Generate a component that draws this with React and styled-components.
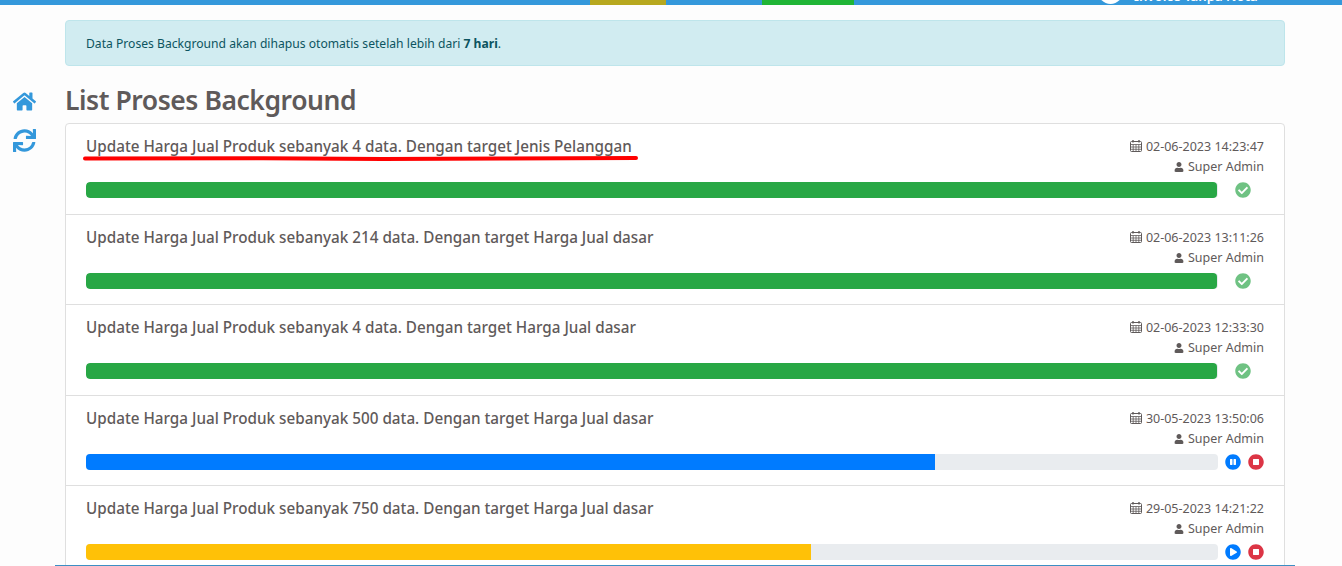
import React from 'react';
import styled, { createGlobalStyle } from 'styled-components';
import { FaHome, FaSync, FaUser, FaCheckCircle, FaPauseCircle, FaPlayCircle, FaStopCircle } from 'react-icons/fa';

const GlobalStyle = createGlobalStyle`
  html, body {
    margin: 0;
    height: 566px;
    overflow: hidden;
    background: #fdfdfd;
    font-family: "Noto Sans", "Open Sans", sans-serif;
    color: #5a5a5a;
  }
  * { box-sizing: border-box; }
`

const data = [
  { title: 'Update Harga Jual Produk sebanyak 4 data. Dengan target Jenis Pelanggan', date: '02-06-2023 14:23:47', value: 99.9, color: '#28a745', state: 'done', marked: true },
  { title: 'Update Harga Jual Produk sebanyak 214 data. Dengan target Harga Jual dasar', date: '02-06-2023 13:11:26', value: 99.9, color: '#28a745', state: 'done' },
  { title: 'Update Harga Jual Produk sebanyak 4 data. Dengan target Harga Jual dasar', date: '02-06-2023 12:33:30', value: 99.9, color: '#28a745', state: 'done' },
  { title: 'Update Harga Jual Produk sebanyak 500 data. Dengan target Harga Jual dasar', date: '30-05-2023 13:50:06', value: 75, color: '#007bff', state: 'running' },
  { title: 'Update Harga Jual Produk sebanyak 750 data. Dengan target Harga Jual dasar', date: '29-05-2023 14:21:22', value: 64.05, color: '#ffc107', state: 'paused' },
]

const CalendarIcon = () => (
  <svg width="12" height="12" viewBox="0 0 12 12" fill="none" stroke="currentColor">
    <rect x="0.5" y="1.5" width="11" height="10" rx="1" />
    <path d="M0.5 4.5H11.5M0.5 7H11.5M0.5 9.3H11.5M3.2 4.5V11.5M6 4.5V11.5M8.8 4.5V11.5" strokeWidth="0.8" />
    <path d="M3 0V2.5M9 0V2.5" strokeWidth="1.4" />
  </svg>
)

const TopBar = styled.div`
  height: 5px;
  background: #3498db;
  display: flex;
  position: relative;
  overflow: hidden;
`
const Segment = styled.div`
  width: ${(props) => props.w}px;
  margin-left: ${(props) => props.gap}px;
  background: ${(props) => props.color};
`
const Avatar = styled.div`
  position: absolute;
  left: 1098px;
  top: -21px;
  width: 25px;
  height: 25px;
  border-radius: 50%;
  background: #fff;
`
const TopLabel = styled.div`
  position: absolute;
  left: 1134px;
  top: -11px;
  font-size: 13.2px;
  font-weight: 600;
  line-height: 14px;
  white-space: nowrap;
  color: #fff;
`
const Page = styled.div`
  display: flex;
  padding-top: 15px;
`
const Side = styled.div`
  width: 65px;
  padding: 70px 0 0 13px;
  display: flex;
  flex-direction: column;
  gap: 16px;
  color: #3498db;
  font-size: 23px;
  svg { display: block; }
`
const Main = styled.div`
  width: 1220px;
`
const Alert = styled.div`
  height: 46px;
  padding: 0 20px;
  display: flex;
  align-items: center;
  font-size: 12.13px;
  color: #0c5460;
  background: #d1ecf1;
  border: 1px solid #bee5eb;
  border-radius: 4px;
  white-space: pre;
  b { font-weight: 700; }
`
const Title = styled.h2`
  margin: 17px 0 6px;
  font-size: 26.5px;
  line-height: 34px;
  font-weight: 600;
  letter-spacing: -0.45px;
  color: #5f5a5a;
`
const List = styled.ul`
  list-style: none;
  margin: 0;
  padding: 0;
  background: #fff;
  border: 1px solid #dfdfdf;
  border-radius: 4px;
`
const Item = styled.li`
  position: relative;
  height: 90.5px;
  padding: 12px 20px;
  border-bottom: 1px solid #dfdfdf;
`
const Head = styled.div`
  display: flex;
  justify-content: space-between;
  height: 46px;
`
const Name = styled.div`
  font-size: 15.25px;
  font-weight: 500;
  line-height: 20px;
  color: #5f5a5a;
`
const Meta = styled.div`
  padding-top: 1px;
  text-align: right;
  font-size: 12.5px;
  line-height: 20px;
  color: #5f5a5a;
  svg { vertical-align: -1px; margin-right: 4px; }
`
const Row = styled.div`
  display: flex;
  align-items: center;
`
const Track = styled.div`
  width: 1132px;
  height: 16px;
  background: #e9ecef;
  border-radius: 4px;
  overflow: hidden;
`
const Fill = styled.div`
  height: 100%;
  background: ${(props) => props.color};
  border-radius: ${(props) => (props.full ? '4px' : '0')};
`
const Actions = styled.div`
  flex: 1;
  display: flex;
  justify-content: flex-end;
  gap: 7px;
  font-size: 16px;
  svg { display: block; }
`
const DoneAction = styled(Actions)`
  justify-content: flex-start;
  padding-left: 17px;
`
const Scribble = styled.svg`
  position: absolute;
  left: 17px;
  top: 30px;
`
const Footer = styled.div`
  position: fixed;
  left: 55px;
  width: 1240px;
  bottom: 0;
  height: 1px;
  background: #3d8fc4;
`

const App = () => {
  return (
    <>
      <GlobalStyle />
      <TopBar>
        <Segment w={76} gap={590} color="#b7a81f" />
        <Segment w={92} gap={96} color="#20b536" />
        <Avatar />
        <TopLabel>Invoice Tanpa Nota</TopLabel>
      </TopBar>
      <Page>
        <Side>
          <FaHome />
          <FaSync />
        </Side>
        <Main>
          <Alert>Data Proses Background akan dihapus otomatis setelah lebih dari <b>7 hari</b>.</Alert>
          <Title>List Proses Background</Title>
          <List>
            {data.map((item) => (
              <Item key={item.date}>
                <Head>
                  <Name>{item.title}</Name>
                  <Meta>
                    <div><CalendarIcon />{item.date}</div>
                    <div><FaUser size={10} />Super Admin</div>
                  </Meta>
                </Head>
                <Row>
                  <Track>
                    <Fill color={item.color} full={item.value > 99} style={{ width: `${item.value}%` }} />
                  </Track>
                  {item.state === 'done' && (
                    <DoneAction>
                      <FaCheckCircle color="#6fc283" />
                    </DoneAction>
                  )}
                  {item.state === 'running' && (
                    <Actions>
                      <FaPauseCircle color="#007bff" />
                      <FaStopCircle color="#dc3545" />
                    </Actions>
                  )}
                  {item.state === 'paused' && (
                    <Actions>
                      <FaPlayCircle color="#007bff" />
                      <FaStopCircle color="#dc3545" />
                    </Actions>
                  )}
                </Row>
                {item.marked && (
                  <Scribble width="560" height="8">
                    <path d="M2 4.5 L180 4.2 L300 5 L420 4.6 L553 4" stroke="#f00" strokeWidth="4" strokeLinecap="round" fill="none" />
                  </Scribble>
                )}
              </Item>
            ))}
          </List>
        </Main>
      </Page>
      <Footer />
    </>
  )
}

export default App
